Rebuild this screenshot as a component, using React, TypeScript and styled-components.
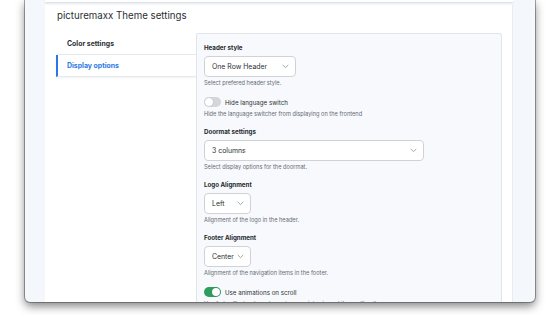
import React, { useState } from 'react';
import styled, { createGlobalStyle } from 'styled-components';

const GlobalStyle = createGlobalStyle`
  html, body {
    margin: 0;
    padding: 0;
    background: #ffffff;
    font-family: Inter, "Noto Sans", "Liberation Sans", sans-serif;
    color: #1f2328;
    overflow: hidden;
  }
  * { box-sizing: border-box; }
`

const Screen = styled.div`
  width: 560px;
  height: 315px;
  padding: 0 25px;
`

const Window = styled.div`
  height: 302px;
  background: #f4f7fb;
  border-radius: 0 0 5px 5px;
  box-shadow: 0 0 0 1px rgba(60, 60, 60, 0.45), 0 4px 10px rgba(0, 0, 0, 0.5);
  overflow: hidden;
  padding: 0 22px 0 20px;
  display: flex;
  flex-direction: column;
`

const TopBar = styled.div`
  height: 2px;
  background: #ffffff;
  box-shadow: 0 1px 2px rgba(0, 0, 0, 0.12);
  margin-bottom: 3px;
  flex-shrink: 0;
`

const Card = styled.div`
  flex: 1;
  background: #ffffff;
  padding: 4px 10px 0 12px;
  border-right: 1px solid #e8ecf1;
`

const Title = styled.h1`
  margin: 0 0 10px 0;
  font-size: 9.7px;
  line-height: 14px;
  font-weight: 400;
  color: #2b2f33;
`

const Body = styled.div`
  display: flex;
  align-items: flex-start;
`

const Nav = styled.nav`
  width: 139px;
  flex-shrink: 0;
  display: flex;
  flex-direction: column;
`

const NavItem = styled.div<{ $active?: boolean }>`
  height: 22px;
  display: flex;
  align-items: center;
  padding-left: 9px;
  font-size: 6.9px;
  font-weight: 700;
  color: ${p => (p.$active ? '#2a78e4' : '#2b2f33')};
  border-bottom: 1px solid #e6e9ee;
  border-left: 2px solid ${p => (p.$active ? '#2a78e4' : 'transparent')};
  margin-left: -1px;
  background: #ffffff;
  box-shadow: ${p => (p.$active ? '0 1px 2px rgba(0,0,0,0.06)' : 'none')};
`

const Panel = styled.section`
  flex: 1;
  min-height: 300px;
  background: #f7f9fd;
  border: 1px solid #e1e5ea;
  border-radius: 2px;
  padding: 9px 8px 0 7px;
`

const Field = styled.div`
  margin-bottom: 9px;
`

const Label = styled.div`
  font-size: 6.2px;
  line-height: 10px;
  font-weight: 700;
  color: #24282c;
  margin-bottom: 3px;
`

const Select = styled.div<{ $width: number }>`
  width: ${p => p.$width}px;
  height: 21px;
  background: #ffffff;
  border: 1px solid #cfd3d8;
  border-radius: 4px;
  display: flex;
  align-items: center;
  justify-content: space-between;
  padding: 0 6px 0 7px;
  font-size: 6.9px;
  color: #2b2f33;
`

const Chevron = styled.svg`
  width: 7px;
  height: 5px;
  flex-shrink: 0;
`

const Desc = styled.div`
  margin-top: 2px;
  font-size: 5.65px;
  line-height: 8px;
  color: #666c73;
  white-space: nowrap;
`

const ToggleRow = styled.div`
  display: flex;
  align-items: center;
  gap: 4px;
  height: 12px;
  font-size: 6.2px;
  color: #2b2f33;
`

const Track = styled.div<{ $on: boolean }>`
  width: 17px;
  height: 10px;
  border-radius: 5px;
  background: ${p => (p.$on ? '#2f9d5c' : '#d3d6db')};
  display: flex;
  align-items: center;
  justify-content: ${p => (p.$on ? 'flex-end' : 'flex-start')};
  padding: 1px;
`

const Knob = styled.div`
  width: 8px;
  height: 8px;
  border-radius: 50%;
  background: #ffffff;
  box-shadow: 0 0 1px rgba(0, 0, 0, 0.3);
`

const ChevronIcon = () => (
  <Chevron viewBox="0 0 7 5">
    <path d="M1 1.2 L3.5 3.6 L6 1.2" fill="none" stroke="#8a9097" strokeWidth="0.8" strokeLinecap="round" strokeLinejoin="round" />
  </Chevron>
)

const SelectBox = ({ value, width }: { value: string; width: number }) => (
  <Select $width={width}>
    <span>{value}</span>
    <ChevronIcon />
  </Select>
)

const Toggle = ({ on, label }: { on: boolean; label: string }) => (
  <ToggleRow>
    <Track $on={on}><Knob /></Track>
    <span>{label}</span>
  </ToggleRow>
)

const App = () => {
  const [active] = useState('display');

  return (
    <>
      <GlobalStyle />
      <Screen>
        <Window>
          <TopBar />
          <Card>
            <Title>picturemaxx Theme settings</Title>
            <Body>
              <Nav>
                <NavItem $active={active === 'color'}>Color settings</NavItem>
                <NavItem $active={active === 'display'}>Display options</NavItem>
              </Nav>
              <Panel>
                <Field>
                  <Label>Header style</Label>
                  <SelectBox value="One Row Header" width={92} />
                  <Desc>Select prefered header style.</Desc>
                </Field>
                <Field>
                  <Toggle on={false} label="Hide language switch" />
                  <Desc>Hide the language switcher from displaying on the frontend</Desc>
                </Field>
                <Field>
                  <Label>Doormat settings</Label>
                  <SelectBox value="3 columns" width={220} />
                  <Desc>Select display options for the doormat.</Desc>
                </Field>
                <Field>
                  <Label>Logo Alignment</Label>
                  <SelectBox value="Left" width={47} />
                  <Desc>Alignment of the logo in the header.</Desc>
                </Field>
                <Field>
                  <Label>Footer Alignment</Label>
                  <SelectBox value="Center" width={47} />
                  <Desc>Alignment of the navigation items in the footer.</Desc>
                </Field>
                <Field>
                  <Toggle on={true} label="Use animations on scroll" />
                  <Desc>Use fade effects when elements come into view while scrolling the page</Desc>
                </Field>
              </Panel>
            </Body>
          </Card>
        </Window>
      </Screen>
    </>
  );
};

export default App;
